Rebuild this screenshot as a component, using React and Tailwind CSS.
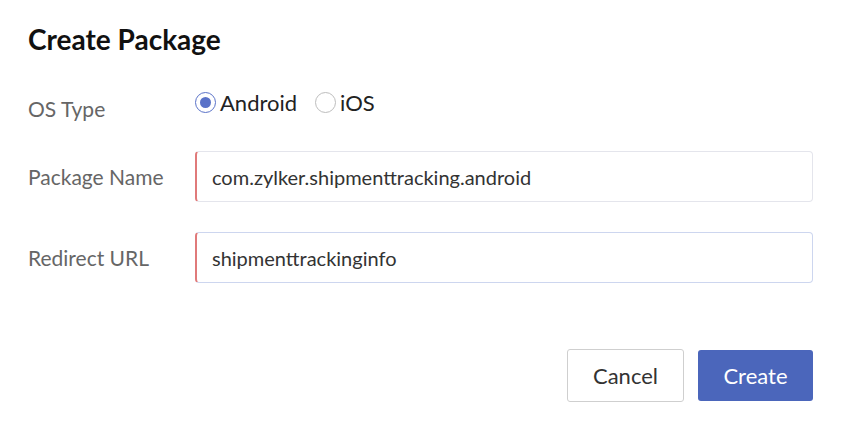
import React from 'react';

const Field = ({ label, value, focused }) => (
  <div className="flex items-center">
    <label className="w-[167px] text-[21px] text-[#666666]">{label}</label>
    <div
      className={`flex h-[51px] w-[618px] items-center rounded-[4px] border border-l-2 border-l-[#e07a7a] bg-white pl-[15px] text-[20px] text-[#333333] ${
        focused ? 'border-[#cdd6ef]' : 'border-[#e4e5ec]'
      }`}
    >
      {value}
    </div>
  </div>
);

const Radio = ({ label, checked }) => (
  <label className="flex items-center gap-[4px] cursor-pointer">
    <span
      className={`flex h-[21px] w-[21px] items-center justify-center rounded-full border ${
        checked ? 'border-[#5a72c8]' : 'border-[#bdbdbd]'
      }`}
    >
      {checked && <span className="h-[11px] w-[11px] rounded-full bg-[#5a72c8]" />}
    </span>
    <span className="text-[22px] leading-[33px] text-[#222222]">{label}</span>
  </label>
);

export default function App() {
  return (
    <div className="h-[426px] w-[842px] bg-white px-[28px] pt-[22px] font-['Lato',sans-serif]">
      <h1 className="text-[28px] font-bold leading-[34px] text-[#111111]">Create Package</h1>

      <div className="mt-[30px] flex items-start">
        <div className="w-[167px] pt-[8px] text-[21px] leading-[30px] text-[#666666]">OS Type</div>
        <div className="flex items-center gap-[18px]">
          <Radio label="Android" checked />
          <Radio label="iOS" />
        </div>
      </div>

      <div className="mt-[27px] flex flex-col gap-[30px]">
        <Field label="Package Name" value="com.zylker.shipmenttracking.android" />
        <Field label="Redirect URL" value="shipmenttrackinginfo" focused />
      </div>

      <div className="mt-[66px] flex items-center justify-end gap-[14px] pr-[1px]">
        <button className="h-[53px] w-[117px] rounded-[3px] border border-[#cfcfcf] bg-white text-[22px] text-[#333333]">
          Cancel
        </button>
        <button className="h-[51px] w-[115px] rounded-[3px] bg-[#4b66bb] text-[22px] text-white">
          Create
        </button>
      </div>
    </div>
  );
}
